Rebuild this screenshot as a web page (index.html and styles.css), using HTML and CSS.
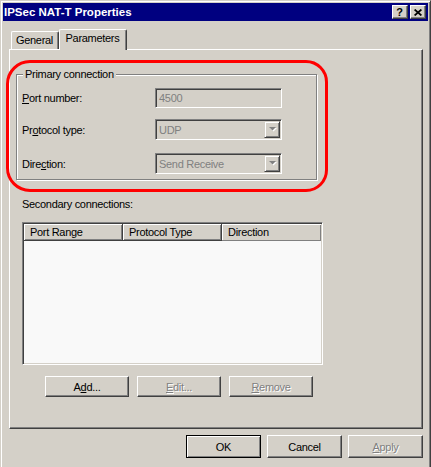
FILE: index.html
```
<!DOCTYPE html>
<html>
<head>
<meta charset="utf-8">
<title>IPSec NAT-T Properties</title>
<link rel="stylesheet" href="styles.css">
</head>
<body>
<div class="window">
  <div class="titlebar">
    <span class="title">IPSec NAT-T Properties</span>
    <div class="caption-btns">
      <span class="cbtn help">?</span>
      <span class="cbtn close"><svg width="8" height="7" viewBox="0 0 8 7"><path d="M0.6 0.5 L7.4 6.5 M7.4 0.5 L0.6 6.5" stroke="#000" stroke-width="1.7" fill="none"/></svg></span>
    </div>
  </div>
  <div class="client">
    <div class="tabs">
      <div class="tab">General</div>
      <div class="tab active">Parameters</div>
    </div>
    <div class="panel">
      <fieldset class="group">
        <legend>Primary connection</legend>
        <div class="form">
          <div class="row row1">
            <span class="lbl"><u>P</u>ort number:</span>
            <div class="field">4500</div>
          </div>
          <div class="row row2">
            <span class="lbl">Pr<u>o</u>tocol type:</span>
            <div class="field combo"><span class="combo-text">UDP</span><span class="drop"><svg width="8" height="5" viewBox="0 0 8 5"><path d="M1 1h7l-3.5 3.5z" fill="#fff"/><path d="M0 0h7l-3.5 3.5z" fill="#808080"/></svg></span></div>
          </div>
          <div class="row row3">
            <span class="lbl">Dire<u>c</u>tion:</span>
            <div class="field combo"><span class="combo-text">Send Receive</span><span class="drop"><svg width="8" height="5" viewBox="0 0 8 5"><path d="M1 1h7l-3.5 3.5z" fill="#fff"/><path d="M0 0h7l-3.5 3.5z" fill="#808080"/></svg></span></div>
          </div>
        </div>
      </fieldset>
      <div class="sec-label">Secondary connections:</div>
      <div class="listview">
        <div class="lv-header">
          <div class="lv-col">Port Range</div>
          <div class="lv-col">Protocol Type</div>
          <div class="lv-col">Direction</div>
        </div>
      </div>
      <div class="list-btns">
        <div class="btn wide">A<u>d</u>d...</div>
        <div class="btn wide disabled"><u>E</u>dit...</div>
        <div class="btn wide disabled"><u>R</u>emove</div>
      </div>
    </div>
    <div class="dlg-btns">
      <div class="btn dlg default">OK</div>
      <div class="btn dlg">Cancel</div>
      <div class="btn dlg disabled"><u>A</u>pply</div>
    </div>
  </div>
  <div class="highlight"></div>
</div>
</body>
</html>
```
FILE: styles.css
```
html, body {
  margin: 0;
  padding: 0;
  overflow: hidden;
  background: #d4d0c8;
}

body {
  font-family: "Liberation Sans", Arial, sans-serif;
  font-size: 11px;
  letter-spacing: -0.3px;
  color: #000;
}

.window {
  position: relative;
  width: 431px;
  height: 467px;
  box-sizing: border-box;
  border: 1px solid;
  border-color: #d4d0c8 #404040 transparent #d4d0c8;
  border-bottom: 0;
  box-shadow: inset 1px 1px #fff, inset -1px 0 #808080;
  padding: 2px 2px 0 2px;
  background: #d4d0c8;
}

.titlebar {
  height: 18px;
  background: #000080;
  display: flex;
  align-items: center;
  justify-content: space-between;
  padding: 0 2px 0 1px;
}

.title {
  color: #fff;
  font-weight: bold;
  font-size: 11.5px;
  letter-spacing: 0;
  line-height: 18px;
}

.caption-btns {
  display: flex;
  gap: 2px;
}

.cbtn {
  width: 16px;
  height: 14px;
  box-sizing: border-box;
  border: 1px solid;
  border-color: #fff #404040 #404040 #fff;
  box-shadow: inset -1px -1px #808080;
  background: #d4d0c8;
  display: flex;
  align-items: center;
  justify-content: center;
}

.cbtn.help {
  font-weight: bold;
  font-size: 11px;
  letter-spacing: 0;
  line-height: 12px;
  padding-right: 1px;
}

.client {
  padding: 8px 5px 0 6px;
}

.tabs {
  height: 20px;
  display: flex;
  align-items: flex-end;
  padding-left: 2px;
}

.tab {
  box-sizing: border-box;
  height: 18px;
  width: 48px;
  border-top: 1px solid #fff;
  border-left: 1px solid #fff;
  border-right: 1px solid #404040;
  box-shadow: inset -1px 0 #808080;
  border-radius: 2px 2px 0 0;
  background: #d4d0c8;
  text-align: center;
  line-height: 17px;
  padding-right: 1px;
}

.tab.active {
  position: relative;
  z-index: 1;
  height: 21px;
  width: 68px;
  margin-bottom: -1px;
  line-height: 17px;
}

.panel {
  width: 414px;
  height: 380px;
  box-sizing: border-box;
  border: 1px solid;
  border-color: #fff #404040 #404040 #fff;
  box-shadow: inset -1px -1px #808080;
}

.group {
  margin: 18px 0 0 6px;
  padding: 0;
  width: 301px;
  box-sizing: border-box;
  border: 1px solid #808080;
  box-shadow: inset 1px 1px #fff, 1px 1px #fff;
  min-inline-size: 0;
}

.group legend {
  margin-left: 6px;
  padding: 0 2px;
  line-height: 12px;
  background: #d4d0c8;
}

.form {
  padding: 8px 0 5px 5px;
}

.row {
  display: flex;
  align-items: center;
  height: 21px;
}

.row1 { height: 20px; }
.row2 { margin-top: 11px; }
.row3 { margin-top: 13px; }

.lbl {
  width: 133px;
  flex: 0 0 133px;
}

.field {
  width: 127px;
  height: 100%;
  box-sizing: border-box;
  border: 1px solid;
  border-color: #808080 #fff #fff #808080;
  box-shadow: inset 1px 1px #404040, inset -1px -1px #d4d0c8;
  color: #808080;
  padding-left: 3px;
  display: flex;
  align-items: center;
}

.combo {
  padding: 1px 1px 1px 3px;
  align-items: stretch;
}

.combo-text {
  flex: 1;
  display: flex;
  align-items: center;
  padding-top: 1px;
}

.drop {
  flex: 0 0 16px;
  box-sizing: border-box;
  border: 1px solid;
  border-color: #d4d0c8 #404040 #404040 #d4d0c8;
  box-shadow: inset 1px 1px #fff, inset -1px -1px #808080;
  display: flex;
  align-items: center;
  justify-content: center;
  padding-left: 1px;
}

.sec-label {
  margin: 18px 0 0 12px;
  line-height: 12px;
}

.listview {
  margin: 12px 0 0 12px;
  width: 301px;
  height: 143px;
  box-sizing: border-box;
  border: 1px solid;
  border-color: #808080 #fff #fff #808080;
  box-shadow: inset 1px 1px #404040, inset -1px -1px #d4d0c8;
  padding: 1px;
  background: #f9f9f9;
}

.lv-header {
  display: flex;
  height: 17px;
}

.lv-col {
  flex: 0 0 99px;
  box-sizing: border-box;
  background: #d4d0c8;
  border-right: 1px solid #404040;
  border-bottom: 1px solid #404040;
  box-shadow: inset 1px 1px #fff, inset -1px -1px #808080;
  padding-left: 6px;
  line-height: 16px;
}

.lv-col:last-child {
  border-right: 0;
  border-bottom-color: #808080;
  box-shadow: inset 1px 1px #fff, inset -1px 0 #808080;
}

.list-btns {
  display: flex;
  gap: 8px;
  margin: 11px 0 0 35px;
}

.btn {
  box-sizing: border-box;
  border: 1px solid;
  border-color: #fff #404040 #404040 #fff;
  box-shadow: inset -1px -1px #808080;
  background: #d4d0c8;
  display: flex;
  align-items: center;
  justify-content: center;
}

.btn.wide {
  width: 84px;
  height: 21px;
}

.btn.disabled {
  color: #808080;
  text-shadow: 1px 1px #fff;
}

.dlg-btns {
  display: flex;
  justify-content: flex-end;
  gap: 6px;
  margin-top: 6px;
  width: 414px;
}

.btn.dlg {
  width: 75px;
  height: 23px;
}

.btn.default {
  border-color: #000;
  box-shadow: inset 1px 1px #fff, inset -1px -1px #808080;
}

.highlight {
  position: absolute;
  left: 5px;
  top: 59px;
  width: 322px;
  height: 132px;
  box-sizing: border-box;
  border: 3px solid #ff0000;
  border-radius: 24px 22px 22px 24px;
  pointer-events: none;
}
```
